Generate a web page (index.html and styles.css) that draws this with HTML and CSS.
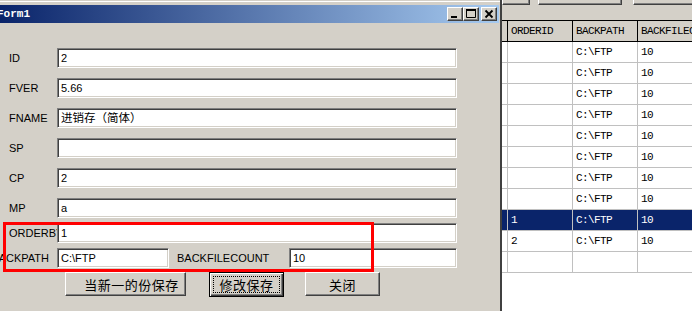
FILE: index.html
```html
<!DOCTYPE html>
<html lang="zh-CN">
  <head>
    <meta charset="UTF-8" />
    <title>Form1</title>
    <link rel="stylesheet" href="styles.css">
  </head>
  <body>
    <div class="screen">
      <!-- Form window -->
      <div class="window">
        <div class="frame-top"></div>
        <div class="titlebar">
          <span class="title">Form1</span>
          <div class="caption-btns">
            <span class="cap-btn">
              <svg width="14" height="12" viewBox="0 0 14 12"><rect x="3" y="8" width="6" height="2" fill="#000"/></svg>
            </span>
            <span class="cap-btn">
              <svg width="14" height="12" viewBox="0 0 14 12"><path d="M2.5 1.5h9v8h-9z M2 2.5h10" fill="none" stroke="#000" stroke-width="1"/><rect x="2" y="1" width="10" height="2" fill="#000"/></svg>
            </span>
            <span class="cap-btn close">
              <svg width="14" height="12" viewBox="0 0 14 12"><path d="M3.5 2.5l7 7M10.5 2.5l-7 7" stroke="#000" stroke-width="1.8"/></svg>
            </span>
          </div>
        </div>

        <div class="form">
          <div class="row"><span class="lbl">ID</span><div class="field wide">2</div></div>
          <div class="row"><span class="lbl">FVER</span><div class="field wide">5.66</div></div>
          <div class="row"><span class="lbl">FNAME</span><div class="field wide cjk">进销存（简体）</div></div>
          <div class="row"><span class="lbl">SP</span><div class="field wide"></div></div>
          <div class="row"><span class="lbl">CP</span><div class="field wide">2</div></div>
          <div class="row near"><span class="lbl">MP</span><div class="field wide">a</div></div>
          <div class="row near"><span class="lbl clip">ORDERBY</span><div class="field wide">1</div></div>
          <div class="row last">
            <span class="lbl right">BACKPATH</span>
            <div class="field short">C:\FTP</div>
            <span class="lbl2">BACKFILECOUNT</span>
            <div class="field mid">10</div>
          </div>

          <div class="actions">
            <button class="btn btn-new">当新一的份保存</button>
            <button class="btn btn-save default"><span class="focus">修改保存</span></button>
            <button class="btn btn-close">关闭</button>
          </div>
        </div>

        <!-- red annotation box -->
        <div class="highlight"></div>
      </div>

      <!-- Data grid on the right -->
      <div class="side">
        <div class="toolbar">
          <span class="tb-btn b1"></span>
          <span class="tb-btn b2"></span>
          <span class="tb-btn b3"></span>
        </div>
        <div class="grid">
          <div class="grow head">
            <span class="c0"></span><span class="c1">ORDERID</span><span class="c2">BACKPATH</span><span class="c3">BACKFILECOUNT</span>
          </div>
          <div class="grow"><span class="c0"></span><span class="c1"></span><span class="c2">C:\FTP</span><span class="c3">10</span></div>
          <div class="grow"><span class="c0"></span><span class="c1"></span><span class="c2">C:\FTP</span><span class="c3">10</span></div>
          <div class="grow"><span class="c0"></span><span class="c1"></span><span class="c2">C:\FTP</span><span class="c3">10</span></div>
          <div class="grow"><span class="c0"></span><span class="c1"></span><span class="c2">C:\FTP</span><span class="c3">10</span></div>
          <div class="grow"><span class="c0"></span><span class="c1"></span><span class="c2">C:\FTP</span><span class="c3">10</span></div>
          <div class="grow"><span class="c0"></span><span class="c1"></span><span class="c2">C:\FTP</span><span class="c3">10</span></div>
          <div class="grow"><span class="c0"></span><span class="c1"></span><span class="c2">C:\FTP</span><span class="c3">10</span></div>
          <div class="grow"><span class="c0"></span><span class="c1"></span><span class="c2">C:\FTP</span><span class="c3">10</span></div>
          <div class="grow selected"><span class="c0"></span><span class="c1">1</span><span class="c2">C:\FTP</span><span class="c3">10</span></div>
          <div class="grow"><span class="c0"></span><span class="c1">2</span><span class="c2">C:\FTP</span><span class="c3">10</span></div>
          <div class="grow"><span class="c0"></span><span class="c1"></span><span class="c2"></span><span class="c3"></span></div>
        </div>
      </div>
    </div>
  </body>
</html>
```

FILE: styles.css
```css
/* General */
body {
  margin: 0;
  background: #d4d0c8;
  font-family: "Liberation Sans", Arial, sans-serif;
  font-size: 11px;
  color: #000;
}

.screen {
  display: flex;
  width: 692px;
  height: 311px;
  overflow: hidden;
}

/* Window */
.window {
  position: relative;
  width: 500px;
  flex-shrink: 0;
  overflow: hidden;
  background: #d4d0c8;
}

.frame-top {
  height: 5px;
  background: linear-gradient(#d4d0c8 1px, #ffffff 1px, #ffffff 2px, #d4d0c8 2px);
}

.titlebar {
  display: flex;
  align-items: center;
  justify-content: space-between;
  height: 18px;
  width: 499px;
  background: linear-gradient(90deg, #0a246a, #a6caf0);
}

.title {
  margin-left: -3px;
  color: #fff;
  font-family: "Liberation Mono", monospace;
  font-weight: bold;
  font-size: 11px;
}

.caption-btns {
  display: flex;
  margin-right: 2px;
}

.cap-btn {
  display: flex;
  align-items: center;
  justify-content: center;
  width: 16px;
  height: 14px;
  box-sizing: border-box;
  background: #d4d0c8;
  border: 1px solid;
  border-color: #fff #404040 #404040 #fff;
  box-shadow: inset -1px -1px #808080;
}

.cap-btn.close {
  margin-left: 2px;
}

/* Form */
.form {
  padding-top: 25px;
}

.row {
  display: flex;
  align-items: center;
  height: 20px;
  margin-bottom: 10px;
}

.row.near {
  margin-bottom: 5px;
}

.row.last {
  margin-bottom: 4px;
}

.lbl {
  width: 48px;
  padding-left: 9px;
  flex-shrink: 0;
  white-space: nowrap;
}

.lbl.clip {
  overflow: hidden;
}

.lbl.right {
  width: 49px;
  padding-left: 0;
  padding-right: 8px;
  text-align: right;
  direction: rtl;
}

.lbl2 {
  width: 112px;
  margin-left: 8px;
  flex-shrink: 0;
  white-space: nowrap;
}

.field {
  height: 20px;
  box-sizing: border-box;
  padding: 3px 0 0 3px;
  background: #fff;
  border: 1px solid;
  border-color: #808080 #fff #fff #808080;
  box-shadow: inset 1px 1px #404040, inset -1px -1px #d4d0c8;
  white-space: nowrap;
  font-size: 11px;
  line-height: 13px;
}

.field.cjk {
  font-family: "Noto Sans CJK SC", sans-serif;
  font-size: 11.5px;
  padding-top: 2px;
}

.field.wide {
  width: 400px;
}

.field.short {
  width: 112px;
}

.field.mid {
  width: 168px;
}

/* Buttons */
.actions {
  display: flex;
  align-items: flex-start;
  padding-left: 65px;
}

.btn {
  height: 24px;
  padding: 0;
  background: #d4d0c8;
  border: 1px solid;
  border-color: #fff #404040 #404040 #fff;
  box-shadow: inset -1px -1px #808080;
  font-family: "Noto Sans CJK SC", sans-serif;
  font-size: 13px;
  letter-spacing: 0.5px;
  color: #000;
}

.btn-new {
  width: 121px;
  padding-left: 12px;
}

.btn-save {
  width: 75px;
  height: 25px;
  margin-left: 23px;
}

.btn-close {
  width: 75px;
  margin-left: 21px;
}

.btn.default {
  border: 1px solid #000;
  box-shadow: inset 1px 1px #fff, inset -1px -1px #404040, inset -2px -2px #808080;
  padding: 3px;
}

.focus {
  display: block;
  height: 15px;
  line-height: 15px;
  border: 1px dotted #000;
}

/* annotation */
.highlight {
  position: absolute;
  left: 3px;
  top: 222px;
  width: 371px;
  height: 50px;
  box-sizing: border-box;
  border: 3px solid #ff0000;
}

/* Right panel */
.side {
  flex: 1;
  display: flex;
  flex-direction: column;
  border-left: 2px solid #404040;
  box-shadow: inset 1px 0 #808080;
}

.toolbar {
  display: flex;
  align-items: flex-start;
  height: 20px;
  background: #d4d0c8;
}

.tb-btn {
  height: 5px;
  box-sizing: border-box;
  border-right: 1px solid #404040;
  border-bottom: 1px solid #404040;
  border-left: 1px solid #fff;
  box-shadow: inset -1px -1px #808080;
}

.b1 {
  width: 28px;
}

.b2 {
  width: 84px;
  margin-left: 8px;
}

.b3 {
  width: 70px;
  margin-left: 11px;
}

.grid {
  flex: 1;
  background: #fff;
  font-family: "Liberation Mono", monospace;
  font-size: 11px;
  letter-spacing: -0.6px;
}

.grow {
  display: flex;
  height: 21px;
  box-sizing: border-box;
  border-bottom: 1px solid #c0c0c0;
}

.grow span {
  box-sizing: border-box;
  border-right: 1px solid #c0c0c0;
  padding-left: 3px;
  line-height: 20px;
  white-space: nowrap;
  overflow: hidden;
}

.grow .c0 {
  width: 6px;
  padding: 0;
}

.grow .c1,
.grow .c2 {
  width: 65px;
}

.grow .c3 {
  flex: 1;
  border-right: none;
}

.grow.head {
  height: 22px;
  background: #d4d0c8;
  border-top: 1px solid #000;
  border-bottom: 1px solid #000;
}

.grow.head span {
  border-right-color: #000;
}

.grow.selected {
  background: #0a246a;
  color: #fff;
}
```
